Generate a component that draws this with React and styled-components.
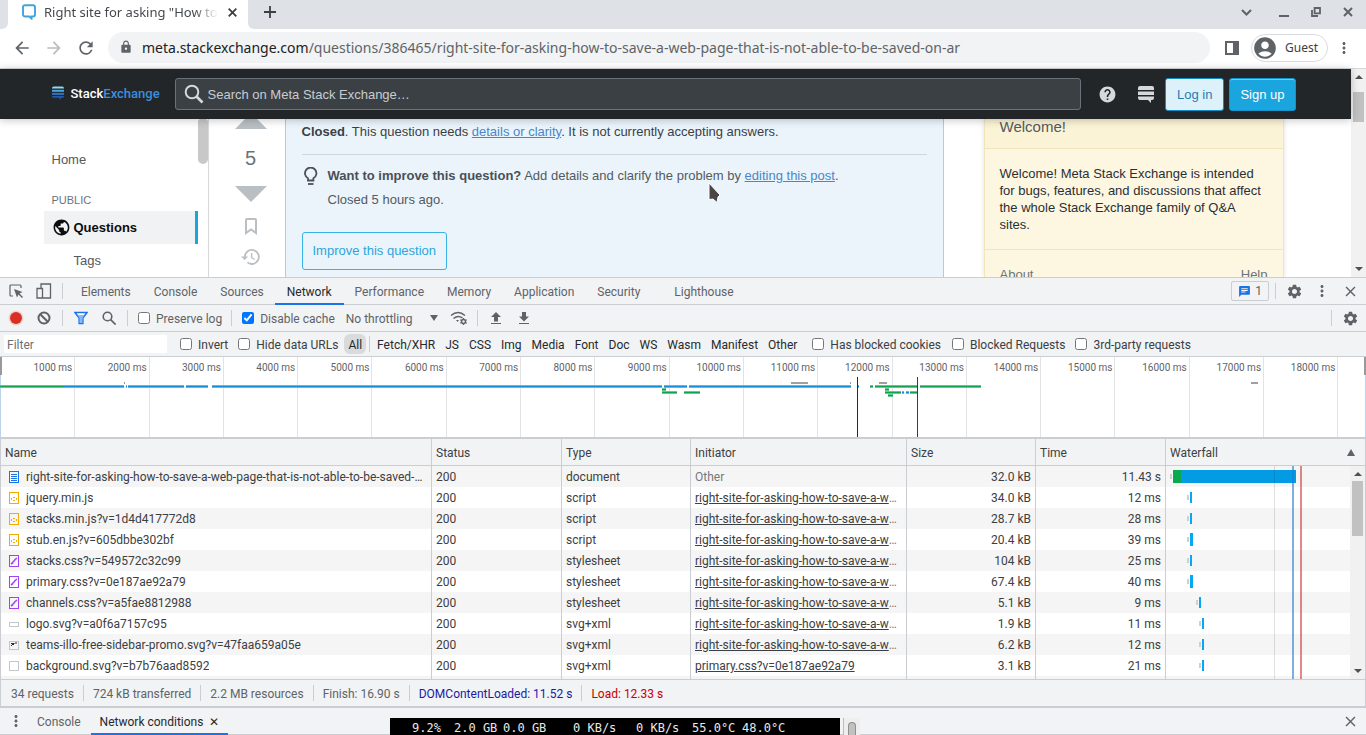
import React from 'react';
import styled, { createGlobalStyle } from 'styled-components';
import {
    MdAccountCircle, MdArrowBack, MdArrowForward, MdBlock, MdChat, MdClose, MdHelp,
    MdLock, MdMoreVert, MdPublic, MdRefresh, MdSettings
} from 'react-icons/md';

const GlobalStyle = createGlobalStyle`
  * { box-sizing: border-box; }
  html, body, #root { height: 100%; }
  body {
    margin: 0;
    overflow: hidden;
    font-family: Roboto, sans-serif;
    font-size: 12px;
  }
  button, input, select { font: inherit; color: inherit; }
`;

const Screen = styled.div`
  position: relative;
  display: flex;
  flex-direction: column;
  height: 100%;
  overflow: hidden;
  background: #ffffff;
`;

const IconButton = styled.button`
  display: flex;
  flex: none;
  align-items: center;
  justify-content: center;
  width: ${props => props.$width || 28}px;
  height: 24px;
  padding: 0;
  border: 0;
  background: none;
  color: ${props => props.$color || '#5f6368'};
`;

const Spacer = styled.div`
  flex: 1;
`;

/* ---------- browser frame ---------- */

const TabStrip = styled.header`
  display: flex;
  flex: none;
  height: 29px;
  font-family: "Noto Sans", sans-serif;
  font-size: 13px;
`;

const StripStart = styled.div`
  width: 8px;
  border-bottom-right-radius: 6px;
  background: #dee1e6;
`;

const StripRest = styled.div`
  display: flex;
  flex: 1;
  align-items: center;
  padding: 0 2px 5px 8px;
  border-bottom-left-radius: 6px;
  background: #dee1e6;
`;

const BrowserTab = styled.div`
  display: flex;
  align-items: center;
  width: 240px;
  padding: 0 2px 5px 14px;
  color: #45494d;
`;

const TabTitle = styled.span`
  flex: 1;
  margin-left: 8px;
  overflow: hidden;
  white-space: nowrap;
  mask-image: linear-gradient(to right, #000 86%, transparent 100%);
`;

const AddressBar = styled.div`
  display: flex;
  flex: none;
  align-items: center;
  height: 40px;
  padding: 0 8px 2px 6px;
  border-bottom: 1px solid #d5d7da;
  font-family: "Noto Sans", sans-serif;
`;

const Omnibox = styled.div`
  display: flex;
  flex: 1;
  align-items: center;
  gap: 9px;
  height: 31px;
  margin: 0 8px 0 6px;
  padding: 0 0 1px 11px;
  border-radius: 16px;
  background: #f1f3f4;
  color: #5f6368;
  font-size: 14px;
  white-space: nowrap;
  overflow: hidden;
`;

const Host = styled.span`
  color: #202124;
`;

const GuestButton = styled.button`
  display: flex;
  align-items: center;
  gap: 7px;
  height: 28px;
  margin: 0 2px 0 5px;
  padding: 0 9px 0 0;
  border: 1px solid #dadce0;
  border-radius: 14px;
  background: #ffffff;
  color: #3c4043;
  font-size: 12px;
`;

/* ---------- web page ---------- */

const PagePane = styled.div`
  display: flex;
  flex: none;
  height: 208px;
  font-family: "Liberation Sans", sans-serif;
  font-size: 13px;
`;

const Page = styled.div`
  display: flex;
  flex: 1;
  flex-direction: column;
  min-width: 0;
`;

const TopBar = styled.div`
  position: relative;
  display: flex;
  flex: none;
  justify-content: center;
  height: 50px;
  background: #232629;
  box-shadow: 0 1px 8px rgba(12, 13, 14, 0.25);
`;

const TopBarInner = styled.div`
  display: flex;
  align-items: center;
  width: 100%;
  max-width: 1264px;
  padding: 0 12px 0 8px;
`;

const SiteLogo = styled.a`
  display: flex;
  align-items: center;
  gap: 7px;
  width: 123px;
  padding-bottom: 2px;
  color: #ffffff;
  font-family: Roboto, sans-serif;
  font-size: 13px;
  font-weight: 500;
  text-decoration: none;

  b { color: #3a8fdd; font-weight: 500; }
`;

const SearchBox = styled.label`
  display: flex;
  flex: 1;
  align-items: center;
  gap: 4px;
  height: 32px;
  margin-right: 8px;
  padding-left: 8px;
  border: 1px solid #6a737c;
  border-radius: 3px;
  background: #3b4045;
  color: #d6d9dc;

  input {
    flex: 1;
    padding: 0;
    border: 0;
    outline: 0;
    background: none;
  }
  input::placeholder { color: #c8ccd0; opacity: 1; }
`;

const AuthButton = styled.a`
  display: flex;
  align-items: center;
  height: 33px;
  margin-left: ${props => (props.$primary ? 5 : 0)}px;
  padding: 0 ${props => (props.$primary ? 10 : 11)}px;
  border: 1px solid ${props => (props.$primary ? '#1295cc' : '#0f8cc4')};
  border-radius: 3px;
  background: ${props => (props.$primary ? '#1ba5de' : '#ddf1fb')};
  box-shadow: inset 0 1px 0 rgba(255, 255, 255, 0.4);
  color: ${props => (props.$primary ? '#ffffff' : '#1f7db5')};
  text-decoration: none;
`;

const PageBody = styled.div`
  display: flex;
  flex: 1;
  width: 100%;
  max-width: 1264px;
  min-height: 0;
  margin: 0 auto;
  overflow: hidden;
`;

const SideNav = styled.nav`
  display: flex;
  flex: none;
  width: 165px;
  border-right: 1px solid #d6d9dc;
`;

const NavList = styled.div`
  display: flex;
  flex: 1;
  flex-direction: column;
  padding-top: 24px;
`;

const NavLink = styled.a`
  display: flex;
  align-items: center;
  height: 33px;
  padding-left: ${props => (props.$indent ? 30 : 8)}px;
  color: #525960;
  text-decoration: none;
`;

const NavHeading = styled.span`
  margin: 18px 0 4px 8px;
  color: #6a737c;
  font-size: 11px;
  line-height: 13px;
`;

const CurrentLink = styled(NavLink)`
  gap: 3px;
  border-right: 3px solid #1ba5de;
  background: #f1f2f3;
  color: #0c0d0e;
  font-weight: bold;
`;

const NavThumb = styled.div`
  width: 10px;
  height: 45px;
  border-radius: 3px 3px 5px 5px;
  background: #c8c8c8;
`;

const Votes = styled.div`
  display: flex;
  flex: none;
  flex-direction: column;
  align-items: center;
  width: 76px;
  padding-left: 8px;
  color: #babfc4;
`;

const VoteButton = styled.button`
  display: flex;
  margin: 0 0 ${props => props.$gap}px;
  padding: 0;
  border: 0;
  background: none;
  color: inherit;
`;

const VoteCount = styled.span`
  margin-bottom: 16px;
  color: #6a737c;
  font-size: 20px;
  line-height: 24px;
`;

const Notice = styled.section`
  flex: 1;
  padding: 4px 16px 0;
  border: solid #a6ceed;
  border-width: 0 1px;
  background: #ebf4fb;
  color: #3b4045;
  line-height: 17px;

  p { margin: 0; }
  a { color: #4a86c8; }
`;

const Improve = styled.div`
  display: flex;
  gap: 8px;
  margin-top: 14px;
  padding-top: 12px;
  border-top: 1px solid #cdd6de;
  color: #535a60;

  p + p { margin-top: 7px; }
  strong { color: #4a5056; }
`;

const ImproveButton = styled.button`
  height: 38px;
  margin-top: 24px;
  padding: 0 10px 2px;
  border: 1px solid #39b3e6;
  border-radius: 3px;
  background: none;
  color: #2ba5dc;
`;

const Welcome = styled.aside`
  flex: none;
  width: 300px;
  margin: 0 24px 0 40px;
  border: solid #f1e5bc;
  border-width: 0 1px;
  background: #fdf7e2;
  box-shadow: 0 0 5px rgba(12, 13, 14, 0.12);
  color: #2b2f33;
  line-height: 17px;

  h3 {
    height: 30px;
    margin: 0;
    padding-left: 15px;
    border-bottom: 1px solid #f1e5bc;
    background: #fbf3d5;
    color: #525960;
    font-size: 15px;
    font-weight: normal;
    line-height: 16px;
  }
  p {
    margin: 0;
    padding: 16px 15px;
    border-bottom: 1px solid #f1e5bc;
  }
`;

const WelcomeLinks = styled.div`
  display: flex;
  justify-content: space-between;
  padding: 16px 15px;

  a { color: #6a737c; text-decoration: none; }
`;

const ScrollTrack = styled.div`
  display: flex;
  flex: none;
  flex-direction: column;
  align-items: center;
  width: 15px;
  padding: 6px 0;
  background: #f1f1f1;
  color: #505050;
`;

const ScrollThumb = styled.div`
  width: 11px;
  height: ${props => props.$height}px;
  margin: ${props => props.$top}px 0 auto;
  background: #c1c1c1;
`;

const Pointer = styled.svg`
  position: absolute;
  top: 181px;
  left: 706px;
`;

/* ---------- devtools ---------- */

const DevTools = styled.main`
  display: flex;
  flex: 1;
  flex-direction: column;
  min-height: 0;
  border-top: 1px solid #cacdd1;
  background: #f1f3f4;
  color: #5f6368;
`;

const Bar = styled.div`
  display: flex;
  flex: none;
  align-items: center;
  height: ${props => props.$height || 27}px;
  padding: 0 2px;
  border-bottom: 1px solid #cacdd1;
`;

const Divider = styled.span`
  flex: none;
  width: 1px;
  height: 16px;
  margin: 0 ${props => (props.$tight ? 2 : 4)}px;
  background: #cacdd1;
`;

const PanelTab = styled.button`
  height: 27px;
  margin: 0 0 0 ${props => props.$offset || -1}px;
  padding: 3px ${props => props.$pad || 12}px 0;
  border: 0;
  border-bottom: 2px solid ${props => (props.$active ? '#1a73e8' : 'transparent')};
  background: none;
  color: ${props => (props.$active ? '#27292c' : '#5f6368')};
  white-space: nowrap;
`;

const IssuesButton = styled.button`
  display: flex;
  align-items: center;
  gap: 4px;
  height: 20px;
  margin-right: 2px;
  padding: 0 6px;
  border: 1px solid #cacdd1;
  border-radius: 2px;
  background: none;
`;

const Check = styled.label`
  display: flex;
  align-items: center;
  gap: 6px;
  margin: 0 5px 0 ${props => props.$left || 5}px;
  color: ${props => (props.$dark ? '#3c4043' : '#5f6368')};
  white-space: nowrap;

  input { width: 12px; height: 12px; margin: 0; }
  span { padding-top: 2px; }
`;

const ThrottleField = styled.div`
  display: flex;
  align-items: center;
  width: 92px;
  margin: 0 7px 0 6px;

  select {
    flex: 1;
    padding: 2px 0 0;
    border: 0;
    background: none;
    appearance: none;
  }
`;

const FilterInput = styled.input`
  width: 163px;
  height: 18px;
  margin: 0 8px 0 2px;
  padding: 2px 3px 0;
  border: 0;
  background: #ffffff;

  &::placeholder { color: #6b7075; opacity: 1; }
`;

const TypeButton = styled.button`
  height: 20px;
  margin: 0 1px;
  padding: 2px 4px 0;
  border: 0;
  border-radius: 6px;
  background: ${props => (props.$active ? '#d8dade' : 'none')};
  color: #27292c;
`;

const Overview = styled.div`
  position: relative;
  flex: none;
  height: 82px;
  overflow: hidden;
  border-bottom: 2px solid #cacdd1;
  background: #ffffff;
`;

const Ruler = styled.div`
  display: flex;
  height: 100%;
  padding-left: 1px;

  span {
    flex: 0 0 5.443%;
    padding: 4px 2px 0 0;
    border-right: 1px solid #e1e3e6;
    color: #5f6368;
    font-size: 10px;
    line-height: 14px;
    text-align: right;
    white-space: nowrap;
  }
`;

const OverviewChart = styled.svg`
  position: absolute;
  top: 0;
  left: 0;
  width: 100%;
  height: 80px;
`;

const Grid = styled.div`
  position: relative;
  flex: 1;
  min-height: 0;
  overflow: hidden;
  border: solid #cacdd1;
  border-width: 0 1px;
  background: #ffffff;
`;

const RequestTable = styled.table`
  width: 100%;
  border-collapse: separate;
  border-spacing: 0;
  table-layout: fixed;
  color: #3c4043;

  th, td {
    padding: 2px 4px 0;
    overflow: hidden;
    border-right: 1px solid #cacdd1;
    text-align: left;
    text-overflow: ellipsis;
    white-space: nowrap;
  }
  th:last-child, td:last-child { border-right: 0; }
  th {
    height: 27px;
    border-bottom: 1px solid #cacdd1;
    background: #f1f3f4;
    font-weight: normal;
  }
  td { height: 21px; line-height: 19px; }
  td.number { text-align: right; }
  td.initiator { padding-right: 8px; color: #75797d; }
  td.waterfall { padding-top: 0; }
  td a { color: #3c4043; }
  tbody tr:nth-child(odd) { background: #f5f5f5; }
`;

const Col = styled.col`
  width: ${props => (props.$width ? `${props.$width}px` : 'auto')};
`;

const WaterfallHead = styled.div`
  display: flex;
  align-items: center;
  justify-content: space-between;
  padding-right: 6px;
`;

const NameCell = styled.div`
  display: flex;
  align-items: center;
  gap: 7px;
  padding: 0 4px;

  svg { flex: none; margin-bottom: 2px; }
  span { overflow: hidden; text-overflow: ellipsis; }
`;

const Timing = styled.div`
  display: flex;
  align-items: center;
  height: 21px;
  padding-left: ${props => props.$start}px;
`;

const Wait = styled.span`
  width: 2px;
  height: 5px;
  margin-right: 1px;
  background: #d0d0d0;
`;

const TimingBar = styled.span`
  width: ${props => props.$width}px;
  height: ${props => (props.$thick ? 13 : 11)}px;
  background: ${props => props.$color || '#03a9f4'};
`;

const EventLine = styled.div`
  position: absolute;
  top: 27px;
  right: ${props => props.$right}px;
  bottom: 0;
  width: ${props => props.$width}px;
  background: ${props => props.$color};
`;

const GridScroll = styled(ScrollTrack)`
  position: absolute;
  top: 27px;
  right: 0;
  bottom: 0;
`;

const Summary = styled.footer`
  display: flex;
  flex: none;
  align-items: center;
  height: 27px;
  padding-left: 5px;
  border: solid #cacdd1;
  border-width: 1px 1px 0;

  span {
    padding: 2px 9px 0 5px;
    line-height: 14px;
    white-space: nowrap;
  }
  span + span { padding-left: 9px; border-left: 1px solid #cacdd1; }
  .dom { color: #1a1aa6; }
  .load { color: #c80000; }
`;

const Drawer = styled.div`
  display: flex;
  flex: none;
  align-items: center;
  height: 29px;
  padding: 0 2px;
  border-top: 2px solid #cacdd1;
  border-bottom: 1px solid #cacdd1;
`;

const Monitor = styled.div`
  position: absolute;
  bottom: 0;
  left: 390px;
  display: flex;
  align-items: center;
  width: 450px;
  height: 17px;
  padding: 4px 0 0 22px;
  background: #000000;
  color: #e8e8e8;
  font-family: "DejaVu Sans Mono", monospace;
  font-size: 12px;
  line-height: 13px;
  white-space: pre;
`;

const MonitorItem = styled.span`
  width: ${props => props.$width}px;
`;

const MonitorScroll = styled.div`
  position: absolute;
  bottom: 0;
  left: 843px;
  display: flex;
  justify-content: center;
  width: 17px;
  height: 17px;
  padding-top: 4px;
  border-left: 1px solid #b9bdc2;
  background: #eeeeee;

  span {
    width: 8px;
    border: 1px solid #8f8f8f;
    border-bottom: 0;
    border-radius: 4px 4px 0 0;
    background: #c1c1c1;
  }
`;

const PAGE_NAME = 'right-site-for-asking-how-to-save-a-web-page-that-is-not-able-to-be-saved-on-ar';
const PAGE_LINK = 'right-site-for-asking-how-to-save-a-web-page';

const requests = [
    { icon: 'doc', name: PAGE_NAME, type: 'document', size: '32.0 kB', time: '11.43 s', start: 0 },
    { icon: 'js', name: 'jquery.min.js', type: 'script', from: PAGE_LINK, size: '34.0 kB', time: '12 ms', start: 17, width: 2 },
    { icon: 'js', name: 'stacks.min.js?v=1d4d417772d8', type: 'script', from: PAGE_LINK, size: '28.7 kB', time: '28 ms', start: 17, width: 2 },
    { icon: 'js', name: 'stub.en.js?v=605dbbe302bf', type: 'script', from: PAGE_LINK, size: '20.4 kB', time: '39 ms', start: 17, width: 3 },
    { icon: 'css', name: 'stacks.css?v=549572c32c99', type: 'stylesheet', from: PAGE_LINK, size: '104 kB', time: '25 ms', start: 17, width: 2 },
    { icon: 'css', name: 'primary.css?v=0e187ae92a79', type: 'stylesheet', from: PAGE_LINK, size: '67.4 kB', time: '40 ms', start: 17, width: 3 },
    { icon: 'css', name: 'channels.css?v=a5fae8812988', type: 'stylesheet', from: PAGE_LINK, size: '5.1 kB', time: '9 ms', start: 26, width: 2 },
    { icon: 'wide', name: 'logo.svg?v=a0f6a7157c95', type: 'svg+xml', from: PAGE_LINK, size: '1.9 kB', time: '11 ms', start: 29, width: 2 },
    { icon: 'illo', name: 'teams-illo-free-sidebar-promo.svg?v=47faa659a05e', type: 'svg+xml', from: PAGE_LINK, size: '6.2 kB', time: '12 ms', start: 29, width: 2 },
    { icon: 'image', name: 'background.svg?v=b7b76aad8592', type: 'svg+xml', from: 'primary.css?v=0e187ae92a79', size: '3.1 kB', time: '21 ms', start: 29, width: 2 }
];

const types = ['Fetch/XHR', 'JS', 'CSS', 'Img', 'Media', 'Font', 'Doc', 'WS', 'Wasm', 'Manifest', 'Other'];
const panels = ['Elements', 'Console', 'Sources', 'Network', 'Performance', 'Memory', 'Application', 'Security', 'Lighthouse'];
const ticks = Array.from({ length: 18 }, (_, i) => `${(i + 1) * 1000} ms`);

const GREEN = ['#66c88a', '#12a150'];
const BLUE = ['#5db9ea', '#1590d8'];

// [x, y, width, colours]
const segments = [
    [0, 28, 63, GREEN], [63, 28, 61, BLUE], [126, 28, 1, BLUE], [128, 28, 56, BLUE],
    [186, 28, 22, BLUE], [212, 28, 450, BLUE], [664, 28, 23, BLUE], [689, 28, 162, BLUE],
    [857, 28, 2, BLUE], [870, 28, 3, GREEN], [875, 28, 42, GREEN], [920, 28, 61, GREEN],
    [662, 31, 4, GREEN], [662, 34, 15, GREEN], [684, 34, 16, GREEN],
    [885, 31, 4, GREEN], [885, 34, 16, GREEN], [902, 34, 2, BLUE], [906, 34, 3, BLUE],
    [910, 34, 7, GREEN], [888, 37, 5, GREEN]
];

function RequestIcon({ kind }) {
    const color = { doc: '#1a73e8', js: '#f2ab00', css: '#a142f4' }[kind] || '#c4c7ca';
    const [top, height] = { wide: [4, 4], illo: [2, 8], image: [1, 9] }[kind] || [0, 11];
    return (
        <svg width="10" height="12" viewBox="0 0 10 12" fill="none" stroke={color}>
            <rect x="0.5" y={top + 0.5} width="9" height={height} />
            {kind === 'doc' && <path d="M2 3.5h6M2 5.500h6M2 7.500h6M2 9.500h6" />}
            {kind === 'js' && <path d="M4 5.500h2M4 8.500h2M2.500 6v2M7.500 6v2" />}
            {kind === 'css' && <path d="M2 9l2-1.500M3.500 7.500L6 5M5.500 5L8 3" strokeWidth="1.600" />}
            {kind === 'illo' && <path d="M2 4.500h3.500M3 5.500h2M2 6.500h1M6 4h2" stroke="#2a2a2a" />}
        </svg>
    );
}

function Arrow({ up }) {
    return (
        <svg width="8" height="4" viewBox="0 0 8 4" fill="currentColor">
            <path d={up ? 'M0 4h8L4 0z' : 'M0 0h8L4 4z'} />
        </svg>
    );
}

function CheckField({ label, ...props }) {
    const { checked, ...rest } = props;
    return (
        <Check {...rest}>
            <input type="checkbox" defaultChecked={checked} />
            <span>{label}</span>
        </Check>
    );
}

function BrowserFrame() {
    return (
        <>
            <TabStrip>
                <StripStart />
                <BrowserTab>
                    <svg width="14" height="16" viewBox="0 0 14 16">
                        <path d="M3 1.2h8a2 2 0 0 1 2 2v7.3a2 2 0 0 1-2 2H9.5v2L7.2 12.5H3a2 2 0 0 1-2-2V3.2a2 2 0 0 1 2-2z" fill="none" stroke="#41a3dc" strokeWidth="1.9" />
                    </svg>
                    <TabTitle>Right site for asking "How to save</TabTitle>
                    <IconButton aria-label="Close tab" $color="#3c4043">
                        <svg width="9" height="9" viewBox="0 0 9 9" stroke="currentColor" strokeWidth="1.8"><path d="M.7.7l7.6 7.600M8.300.7L.7 8.300" /></svg>
                    </IconButton>
                </BrowserTab>
                <StripRest>
                    <IconButton aria-label="New tab" $color="#3c4043">
                        <svg width="12" height="12" viewBox="0 0 12 12" stroke="currentColor" strokeWidth="1.8"><path d="M6 0v12M0 6h12" /></svg>
                    </IconButton>
                    <Spacer />
                    <IconButton aria-label="Search tabs" $width={44}>
                        <svg width="11" height="7" viewBox="0 0 11 7" fill="none" stroke="currentColor" strokeWidth="2"><path d="M1 1l4.5 4.5L10 1" /></svg>
                    </IconButton>
                    <IconButton aria-label="Minimize" $width={32}>
                        <svg width="10" height="10" viewBox="0 0 10 10" stroke="currentColor" strokeWidth="2"><path d="M0 9h10" /></svg>
                    </IconButton>
                    <IconButton aria-label="Restore" $width={32}>
                        <svg width="10" height="10" viewBox="0 0 10 10" fill="none" stroke="currentColor" strokeWidth="1.8"><path d="M3.6 1H9v5.4H3.6zM1 3v6h6" /></svg>
                    </IconButton>
                    <IconButton aria-label="Close window" $width={32}>
                        <svg width="10" height="10" viewBox="0 0 10 10" stroke="currentColor" strokeWidth="2"><path d="M1 1l8 8M9 1L1 9" /></svg>
                    </IconButton>
                </StripRest>
            </TabStrip>
            <AddressBar>
                <IconButton aria-label="Back" $width={32}><MdArrowBack size={20} /></IconButton>
                <IconButton aria-label="Forward" $width={32} $color="#babcbe"><MdArrowForward size={20} /></IconButton>
                <IconButton aria-label="Reload" $width={32}><MdRefresh size={20} /></IconButton>
                <Omnibox>
                    <MdLock size={14} />
                    <span><Host>meta.stackexchange.com</Host>/questions/386465/{PAGE_NAME}</span>
                </Omnibox>
                <IconButton aria-label="Side panel">
                    <svg width="14" height="14" viewBox="0 0 14 14"><path d="M0 0h14v14H0zM2 2v10h6V2z" fill="currentColor" fillRule="evenodd" /></svg>
                </IconButton>
                <GuestButton>
                    <MdAccountCircle size={26} color="#5f6368" />
                    Guest
                </GuestButton>
                <IconButton aria-label="Menu"><MdMoreVert size={18} /></IconButton>
            </AddressBar>
        </>
    );
}

function WebPage() {
    return (
        <PagePane>
            <Page>
                <TopBar>
                    <TopBarInner>
                        <SiteLogo href="#home">
                            <svg width="12" height="14" viewBox="0 0 12 14">
                                <path d="M0 2.200Q0 .5 1.800.5h8.400Q12 .5 12 2.200v.3H0z" fill="#8fd8f7" />
                                <path d="M0 3.800h12v2H0z" fill="#49a5e0" />
                                <path d="M0 6.900h12v2H0z" fill="#2f72c4" />
                                <path d="M0 10h12v.2q0 1.600-1.800 1.600h-.7L7.500 14v-2.200H1.800Q0 11.800 0 10.200z" fill="#2458a8" />
                            </svg>
                            <span>Stack<b>Exchange</b></span>
                        </SiteLogo>
                        <SearchBox>
                            <svg width="20" height="20" viewBox="0 0 20 20" fill="none" stroke="currentColor" strokeWidth="2">
                                <circle cx="8" cy="8" r="6.300" />
                                <path d="M12.500 12.500l6 6" strokeWidth="2.600" />
                            </svg>
                            <input aria-label="Search" placeholder="Search on Meta Stack Exchange…" />
                        </SearchBox>
                        <IconButton aria-label="Help center" $width={38} $color="#d6d9dc"><MdHelp size={19} /></IconButton>
                        <IconButton aria-label="Sites" $width={38} $color="#d6d9dc">
                            <svg width="16" height="17" viewBox="0 0 16 17" fill="currentColor">
                                <path d="M0 2Q0 0 2 0h12q2 0 2 2v2H0zM0 5.500h16v3.500H0zM0 10.500h16V12q0 2-2 2h-1v3l-3-3H2q-2 0-2-2z" />
                            </svg>
                        </IconButton>
                        <AuthButton href="#login">Log in</AuthButton>
                        <AuthButton href="#signup" $primary>Sign up</AuthButton>
                    </TopBarInner>
                </TopBar>
                <PageBody>
                    <SideNav>
                        <NavList>
                            <NavLink href="#home">Home</NavLink>
                            <NavHeading>PUBLIC</NavHeading>
                            <CurrentLink href="#questions"><MdPublic size={19} />Questions</CurrentLink>
                            <NavLink href="#tags" $indent>Tags</NavLink>
                        </NavList>
                        <NavThumb />
                    </SideNav>
                    <Votes>
                        <VoteButton aria-label="Up vote" $gap={17}>
                            <svg width="32" height="10" viewBox="0 0 32 10" fill="currentColor"><path d="M10 0h12l10 10H0z" /></svg>
                        </VoteButton>
                        <VoteCount>5</VoteCount>
                        <VoteButton aria-label="Down vote" $gap={16}>
                            <svg width="32" height="16" viewBox="0 0 32 16" fill="currentColor"><path d="M0 0h32L16 16z" /></svg>
                        </VoteButton>
                        <VoteButton aria-label="Bookmark" $gap={13}>
                            <svg width="12" height="17" viewBox="0 0 12 17" fill="none" stroke="currentColor" strokeWidth="2">
                                <path d="M2 1h8q1 0 1 1v13l-5-3.500L1 15V2q0-1 1-1z" />
                            </svg>
                        </VoteButton>
                        <VoteButton aria-label="Timeline" $gap={0}>
                            <svg width="20" height="18" viewBox="0 0 20 18" fill="none" stroke="currentColor" strokeWidth="1.800">
                                <path d="M3.800 9a7 7 0 1 1 2.600 5.400" />
                                <path d="M0 8.500h7.200L3.600 12z" fill="currentColor" stroke="none" />
                                <path d="M10.600 5v4.500l3 2" strokeWidth="1.400" />
                            </svg>
                        </VoteButton>
                    </Votes>
                    <Notice>
                        <p><strong>Closed</strong>. This question needs <a href="#clarity">details or clarity</a>. It is not currently accepting answers.</p>
                        <Improve>
                            <svg width="18" height="20" viewBox="0 0 18 20" fill="none" stroke="#4a5056" strokeWidth="1.800">
                                <path d="M6 13.500v-2.200a5.700 5.700 0 1 1 5.400 0v2.200z" />
                                <path d="M6 17h5.500" />
                            </svg>
                            <div>
                                <p><strong>Want to improve this question?</strong> Add details and clarify the problem by <a href="#edit">editing this post</a>.</p>
                                <p>Closed 5 hours ago.</p>
                            </div>
                        </Improve>
                        <ImproveButton>Improve this question</ImproveButton>
                    </Notice>
                    <Welcome>
                        <h3>Welcome!</h3>
                        <p>Welcome! Meta Stack Exchange is intended for bugs, features, and discussions that affect the whole Stack Exchange family of Q&amp;A sites.</p>
                        <WelcomeLinks>
                            <a href="#about">About</a>
                            <a href="#help">Help</a>
                        </WelcomeLinks>
                    </Welcome>
                </PageBody>
            </Page>
            <ScrollTrack>
                <Arrow up />
                <ScrollThumb $height={30} $top={13} />
                <Arrow />
            </ScrollTrack>
        </PagePane>
    );
}

function Timeline() {
    return (
        <Overview>
            <Ruler>
                {ticks.map(tick => <span key={tick}>{tick}</span>)}
            </Ruler>
            <OverviewChart viewBox="0 0 1366 80" preserveAspectRatio="none" shapeRendering="crispEdges">
                <rect x="0" y="18" width="1" height="62" fill="#bcd3ee" />
                <rect x="1365" y="18" width="1" height="62" fill="#bcd3ee" />
                <rect x="0" y="0" width="2" height="18" fill="#999999" />
                <rect x="1364" y="0" width="2" height="18" fill="#999999" />
                {segments.map(([x, y, width, [light, dark]]) => (
                    <g key={`${x}-${y}`}>
                        <rect x={x} y={y} width={width} height="3" fill={light} />
                        <rect x={x} y={y + 1} width={width} height="1" fill={dark} />
                    </g>
                ))}
                <path d="M791 26h17M879 26h8M1251 26h7" stroke="#a0a0a0" strokeWidth="2" />
                <path d="M124 26h1M850 26h1" stroke="#999999" strokeWidth="2" />
                <rect x="857" y="20" width="1" height="60" fill="#1a1aa6" />
                <rect x="917" y="20" width="1" height="60" fill="#c80000" />
            </OverviewChart>
        </Overview>
    );
}

function Requests() {
    return (
        <Grid>
            <RequestTable>
                <colgroup>
                    <Col />
                    <Col $width={130} />
                    <Col $width={129} />
                    <Col $width={216} />
                    <Col $width={129} />
                    <Col $width={130} />
                    <Col $width={199} />
                </colgroup>
                <thead>
                    <tr>
                        <th>Name</th>
                        <th>Status</th>
                        <th>Type</th>
                        <th>Initiator</th>
                        <th>Size</th>
                        <th>Time</th>
                        <th>
                            <WaterfallHead>
                                Waterfall
                                <svg width="8" height="8" viewBox="0 0 8 8"><path d="M0 7h8L4 0z" fill="#5f6368" /></svg>
                            </WaterfallHead>
                        </th>
                    </tr>
                </thead>
                <tbody>
                    {requests.map(request => (
                        <tr key={request.name}>
                            <td><NameCell><RequestIcon kind={request.icon} /><span>{request.name}</span></NameCell></td>
                            <td>200</td>
                            <td>{request.type}</td>
                            <td className="initiator">{request.from ? <a href="#initiator">{request.from}</a> : 'Other'}</td>
                            <td className="number">{request.size}</td>
                            <td className="number">{request.time}</td>
                            <td className="waterfall">
                                <Timing $start={request.start}>
                                    <Wait />
                                    {request.width ? (
                                        <TimingBar $width={request.width} $thick={request.width > 2} />
                                    ) : (
                                        <>
                                            <TimingBar $width={8} $color="#0aa84f" $thick />
                                            <TimingBar $width={115} $color="#049be5" $thick />
                                        </>
                                    )}
                                </Timing>
                            </td>
                        </tr>
                    ))}
                    <tr><td /><td /><td /><td /><td /><td /><td /></tr>
                </tbody>
            </RequestTable>
            <EventLine $right={90} $width={1} $color="rgba(0, 0, 0, 0.12)" />
            <EventLine $right={71} $width={2} $color="rgba(40, 120, 210, 0.6)" />
            <EventLine $right={63} $width={2} $color="rgba(200, 40, 40, 0.55)" />
            <GridScroll>
                <Arrow up />
                <ScrollThumb $height={55} $top={5} />
                <Arrow />
            </GridScroll>
        </Grid>
    );
}

function NetworkTools() {
    return (
        <DevTools>
            <Bar>
                <IconButton aria-label="Inspect element">
                    <svg width="14" height="14" viewBox="0 0 14 14" fill="none" stroke="currentColor">
                        <path d="M4 12H2q-1 0-1-1V2q0-1 1-1h9q1 0 1 1v2" strokeWidth="1.200" />
                        <path d="M5 5l8.500 3-3 1.500 3.500 3.500-1 1-3.500-3.500L8 13.500z" fill="currentColor" stroke="none" />
                    </svg>
                </IconButton>
                <IconButton aria-label="Device toolbar">
                    <svg width="16" height="16" viewBox="0 0 16 16" fill="none" stroke="currentColor" strokeWidth="1.300">
                        <path d="M5 5V1h9.500v14H6.500M1 5.500h5.500V15H1z" />
                    </svg>
                </IconButton>
                <Divider />
                {panels.map(panel => (
                    <PanelTab
                        key={panel}
                        $active={panel === 'Network'}
                        $offset={panel === 'Elements' ? 2 : panel === 'Lighthouse' ? 10 : 0}
                    >
                        {panel}
                    </PanelTab>
                ))}
                <Spacer />
                <IssuesButton><MdChat size={13} color="#1a73e8" />1</IssuesButton>
                <Divider />
                <IconButton aria-label="Settings"><MdSettings size={17} /></IconButton>
                <IconButton aria-label="More options"><MdMoreVert size={18} /></IconButton>
                <IconButton aria-label="Close devtools"><MdClose size={17} /></IconButton>
            </Bar>
            <Bar>
                <IconButton aria-label="Stop recording">
                    <svg width="16" height="16" viewBox="0 0 16 16"><circle cx="8" cy="8" r="7.500" fill="#f3d3d0" /><circle cx="8" cy="8" r="6" fill="#d93025" /></svg>
                </IconButton>
                <IconButton aria-label="Clear">
                    <svg width="14" height="14" viewBox="0 0 14 14" fill="none" stroke="currentColor" strokeWidth="2"><circle cx="7" cy="7" r="5.500" /><path d="M3.200 3.200l7.600 7.600" /></svg>
                </IconButton>
                <Divider />
                <IconButton aria-label="Filter">
                    <svg width="14" height="14" viewBox="0 0 14 14" stroke="#1a73e8" strokeWidth="1.600">
                        <path d="M1 1.500h12L8.800 7v5.500H5.200V7z" fill="#ffffff" />
                        <path d="M3.500 4h7L8.500 7v5h-3V7z" fill="#8ab9f5" stroke="none" />
                    </svg>
                </IconButton>
                <IconButton aria-label="Search">
                    <svg width="14" height="14" viewBox="0 0 14 14" fill="none" stroke="currentColor" strokeWidth="1.600"><circle cx="5.500" cy="5.500" r="4.300" /><path d="M8.600 8.600l5 5" /></svg>
                </IconButton>
                <Divider />
                <CheckField label="Preserve log" $left={6} />
                <Divider />
                <CheckField label="Disable cache" $left={6} checked />
                <ThrottleField>
                    <select aria-label="Throttling"><option>No throttling</option></select>
                    <svg width="8" height="6" viewBox="0 0 8 6"><path d="M0 0h8L4 6z" fill="#5f6368" /></svg>
                </ThrottleField>
                <IconButton aria-label="Network conditions">
                    <svg width="18" height="16" viewBox="0 0 18 16" fill="none" stroke="currentColor" strokeWidth="1.500">
                        <path d="M1 5.500q7-6 14 0M3.500 8.500q4.500-3.800 9-.5" />
                        <path d="M6 10h3l-1.500 2z" fill="currentColor" stroke="none" />
                        <circle cx="13.500" cy="11.500" r="2" />
                        <path d="M13.500 8v1.500M13.500 13.500V15M10.300 9.800l1.400.8M15.300 12.400l1.400.8M10.300 13.200l1.400-.8M15.300 10.600l1.400-.8" strokeWidth="1.200" />
                    </svg>
                </IconButton>
                <Divider />
                <IconButton aria-label="Import HAR">
                    <svg width="10" height="12" viewBox="0 0 10 12" fill="currentColor"><path d="M5 0l5 5H7v4.500H3V5H0zM0 11h10v1H0z" /></svg>
                </IconButton>
                <IconButton aria-label="Export HAR">
                    <svg width="10" height="12" viewBox="0 0 10 12" fill="currentColor"><path d="M5 9.500l5-5H7V0H3v4.500H0zM0 11h10v1H0z" /></svg>
                </IconButton>
                <Spacer />
                <Divider />
                <IconButton aria-label="Network settings"><MdSettings size={17} /></IconButton>
            </Bar>
            <Bar $height={25}>
                <FilterInput aria-label="Filter" placeholder="Filter" />
                <CheckField label="Invert" $dark />
                <CheckField label="Hide data URLs" $dark />
                <TypeButton $active>All</TypeButton>
                <Divider $tight />
                {types.map(type => <TypeButton key={type}>{type}</TypeButton>)}
                <CheckField label="Has blocked cookies" $dark $left={10} />
                <CheckField label="Blocked Requests" $dark $left={6} />
                <CheckField label="3rd-party requests" $dark />
            </Bar>
            <Timeline />
            <Requests />
            <Summary>
                <span>34 requests</span>
                <span>724 kB transferred</span>
                <span>2.2 MB resources</span>
                <span>Finish: 16.90 s</span>
                <span className="dom">DOMContentLoaded: 11.52 s</span>
                <span className="load">Load: 12.33 s</span>
            </Summary>
            <Drawer>
                <IconButton aria-label="More tools"><MdMoreVert size={18} /></IconButton>
                <PanelTab $pad={8}>Console</PanelTab>
                <PanelTab $pad={9} $active $offset={2}>Network conditions &nbsp;✕</PanelTab>
                <Spacer />
                <IconButton aria-label="Close drawer"><MdClose size={17} /></IconButton>
            </Drawer>
        </DevTools>
    );
}

function App() {
    return (
        <Screen>
            <GlobalStyle />
            <BrowserFrame />
            <WebPage />
            <NetworkTools />
            <Monitor>
                <MonitorItem $width={42}>9.2%</MonitorItem>
                <MonitorItem $width={49}>2.0 GB</MonitorItem>
                <MonitorItem $width={70}>0.0 GB</MonitorItem>
                <MonitorItem $width={63}>0 KB/s</MonitorItem>
                <MonitorItem $width={56}>0 KB/s</MonitorItem>
                <MonitorItem $width={50}>55.0°C</MonitorItem>
                <MonitorItem $width={50}>48.0°C</MonitorItem>
            </Monitor>
            <MonitorScroll><span /></MonitorScroll>
            <Pointer width="16" height="24" viewBox="0 0 16 24">
                <path d="M3 2v16.500l4-.5 4 3.500 1-5.500 2-2z" fill="#4a4648" stroke="#ffffff" strokeWidth="1" />
            </Pointer>
        </Screen>
    );
}

export default App;
